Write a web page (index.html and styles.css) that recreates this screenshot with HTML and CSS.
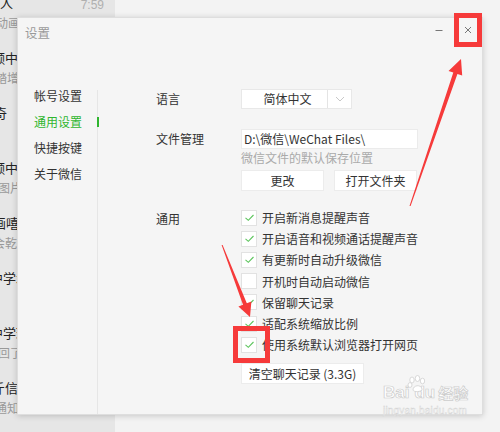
FILE: index.html
```html
<!DOCTYPE html>
<html lang="zh-CN">
<head>
<meta charset="utf-8">
<title>设置</title>
<link rel="stylesheet" href="styles.css">
</head>
<body>
<div class="desktop">
  <div class="chatlist">
    <div class="chat first">
      <div class="chat-title"><span class="name ind-0">人</span><span class="time">7:59</span></div>
      <div class="chat-sub ind-4">动画</div>
    </div>
    <div class="chat">
      <div class="chat-title"><span class="name ind-8">频中华</span></div>
      <div class="chat-sub ind-5">踏增 :</div>
    </div>
    <div class="chat">
      <div class="chat-title"><span class="name ind-6">奇</span></div>
      <div class="chat-sub"></div>
    </div>
    <div class="chat">
      <div class="chat-title"><span class="name ind-8">频中华</span></div>
      <div class="chat-sub ind-2">图片</div>
    </div>
    <div class="chat">
      <div class="chat-title"><span class="name ind-7">画嘻吗</span></div>
      <div class="chat-sub ind-7">会乾</div>
    </div>
    <div class="chat">
      <div class="chat-title"><span class="name ind-10">中学术</span></div>
      <div class="chat-sub"></div>
    </div>
    <div class="chat">
      <div class="chat-title"><span class="name ind-10">中学珊</span></div>
      <div class="chat-sub ind-2">回了</div>
    </div>
    <div class="chat">
      <div class="chat-title"><span class="name ind-8">斤信息</span></div>
      <div class="chat-sub ind-5">通知</div>
    </div>
  </div>
  <div class="chatarea"></div>
</div>

<div class="window">
  <div class="titlebar">
    <span class="wtitle">设置</span>
    <span class="wbtn min"><svg width="10" height="10" viewBox="0 0 10 10"><line x1="1.5" y1="5.5" x2="8.5" y2="5.5" stroke="#777" stroke-width="1"/></svg></span>
    <span class="wbtn close"><svg width="10" height="10" viewBox="0 0 10 10"><path d="M2 2 L8 8 M8 2 L2 8" stroke="#777" stroke-width="1"/></svg></span>
  </div>
  <div class="wbody">
    <div class="sidebar">
      <div class="side-list">
        <div class="side-item">帐号设置</div>
        <div class="side-item active">通用设置</div>
        <div class="side-item">快捷按键</div>
        <div class="side-item">关于微信</div>
      </div>
    </div>
    <div class="main">
      <div class="row lang">
        <div class="label">语言</div>
        <div class="control">
          <div class="select">
            <span class="select-text">简体中文</span>
            <span class="select-arrow"><svg width="10" height="6" viewBox="0 0 10 6"><path d="M1 1 L5 5 L9 1" fill="none" stroke="#c8c8c8" stroke-width="1"/></svg></span>
          </div>
        </div>
      </div>
      <div class="row files">
        <div class="label">文件管理</div>
        <div class="control">
          <div class="path">D:\微信\WeChat Files\</div>
          <div class="hint">微信文件的默认保存位置</div>
          <div class="btns">
            <div class="btn">更改</div>
            <div class="btn">打开文件夹</div>
          </div>
        </div>
      </div>
      <div class="row general">
        <div class="label">通用</div>
        <div class="control">
          <div class="check"><span class="box on"><svg width="13" height="13" viewBox="0 0 13 13"><path d="M2.5 6.8 L5.3 9.3 L10.5 4" fill="none" stroke="#5cc45c" stroke-width="1.1"/></svg></span><span>开启新消息提醒声音</span></div>
          <div class="check"><span class="box on"><svg width="13" height="13" viewBox="0 0 13 13"><path d="M2.5 6.8 L5.3 9.3 L10.5 4" fill="none" stroke="#5cc45c" stroke-width="1.1"/></svg></span><span>开启语音和视频通话提醒声音</span></div>
          <div class="check"><span class="box on"><svg width="13" height="13" viewBox="0 0 13 13"><path d="M2.5 6.8 L5.3 9.3 L10.5 4" fill="none" stroke="#5cc45c" stroke-width="1.1"/></svg></span><span>有更新时自动升级微信</span></div>
          <div class="check"><span class="box"></span><span>开机时自动启动微信</span></div>
          <div class="check"><span class="box on"><svg width="13" height="13" viewBox="0 0 13 13"><path d="M2.5 6.8 L5.3 9.3 L10.5 4" fill="none" stroke="#5cc45c" stroke-width="1.1"/></svg></span><span>保留聊天记录</span></div>
          <div class="check"><span class="box on"><svg width="13" height="13" viewBox="0 0 13 13"><path d="M2.5 6.8 L5.3 9.3 L10.5 4" fill="none" stroke="#5cc45c" stroke-width="1.1"/></svg></span><span>适配系统缩放比例</span></div>
          <div class="check"><span class="box on"><svg width="13" height="13" viewBox="0 0 13 13"><path d="M2.5 6.8 L5.3 9.3 L10.5 4" fill="none" stroke="#5cc45c" stroke-width="1.1"/></svg></span><span>使用系统默认浏览器打开网页</span></div>
          <div class="btn wide">清空聊天记录 (3.3G)</div>
        </div>
      </div>
    </div>
  </div>
</div>

<div class="watermark">
  <div class="wm-main"><span>Bai</span><svg class="paw" width="20" height="18" viewBox="0 0 20 18"><g fill="#fff" stroke="#cfcfcf" stroke-width="0.8"><ellipse cx="5" cy="5" rx="2.2" ry="3"/><ellipse cx="10.5" cy="3.5" rx="2.2" ry="3"/><ellipse cx="15.5" cy="6" rx="2.2" ry="2.8"/><ellipse cx="3" cy="10" rx="2" ry="2.4"/><path d="M6 15 C6 10 14 9 15 14 C15.5 17 6.5 17.5 6 15 Z"/></g></svg><span>du</span><span class="wm-cn">经验</span></div>
  <div class="wm-url">jingyan.baidu.com</div>
</div>

<svg class="annot" width="500" height="432" viewBox="0 0 500 432">
  <rect x="456.5" y="15.5" width="23" height="29" fill="none" stroke="#f63a3a" stroke-width="5"/>
  <rect x="235.5" y="328.5" width="32" height="32" fill="none" stroke="#f63a3a" stroke-width="5"/>
  <polygon points="461,59 448.5,71 453.3,72.4 409.5,206 410.6,206 457.4,73.9 462.2,75.6" fill="#f63a3a"/>
  <polygon points="250,317 238.4,306.5 243,304.7 221.6,245 222.6,245 246.8,303.3 251.4,301.5" fill="#f63a3a"/>
</svg>
</body>
</html>
```

FILE: styles.css
```css
* { box-sizing: border-box; }
html, body { margin: 0; padding: 0; }
body {
  width: 500px;
  height: 432px;
  overflow: hidden;
  position: relative;
  font-family: "Noto Sans CJK SC", "Microsoft YaHei", sans-serif;
  color: #333;
  background: #f3f3f3;
}
.desktop { display: flex; height: 432px; }
.chatlist {
  width: 115px;
  background: #e6e6e6;
  display: flex;
  flex-direction: column;
  overflow: hidden;
}
.chat { height: 55px; flex: none; padding-top: 2px; overflow: hidden; }
.chat.first { margin-top: -9px; }
.chat-title {
  display: flex;
  justify-content: space-between;
  align-items: center;
  height: 20px;
  padding-right: 11px;
  font-size: 13px;
  line-height: 20px;
  color: #222;
  white-space: nowrap;
}
.chat-title .name { display: block; }
.time { font-size: 12px; color: #b0b0b0; font-family: "Liberation Sans", sans-serif; margin-top: 3px; }
.chat-sub { font-size: 12px; line-height: 20px; height: 20px; color: #999; white-space: nowrap; }
.ind-0 { text-indent: 0; }
.ind-2 { text-indent: -2px; }
.ind-4 { text-indent: -4px; }
.ind-5 { text-indent: -5px; }
.ind-6 { text-indent: -6px; }
.ind-7 { text-indent: -7px; }
.ind-8 { text-indent: -8px; }
.ind-10 { text-indent: -10px; }
.chatarea { flex: 1; background: #f3f3f3; }

.window {
  position: absolute;
  left: 17px;
  top: 17px;
  width: 466px;
  height: 398px;
  background: #f5f5f5;
  border: 1px solid #dedede;
  box-shadow: 0 1px 6px rgba(0,0,0,0.18);
  display: flex;
  flex-direction: column;
}
.titlebar {
  height: 29px;
  display: flex;
  align-items: center;
  padding-left: 7px;
  flex: none;
}
.wtitle { font-size: 12.5px; color: #9a9a9a; flex: 1; line-height: 16px; }
.wbtn { width: 29px; height: 22px; display: flex; align-items: center; justify-content: center; margin-top: -6px; }

.wbody { flex: 1; display: flex; }
.sidebar {
  width: 80px;
  margin-top: 43px;
  border-right: 1px solid #e6e6e6;
  flex: none;
}
.side-list { margin-top: -7px; }
.side-item {
  height: 26px;
  line-height: 26px;
  padding-left: 16px;
  font-size: 12px;
  color: #333;
  position: relative;
  white-space: nowrap;
}
.side-item.active { color: #2fb52f; }
.side-item.active::after {
  content: "";
  position: absolute;
  right: -1.5px;
  top: 8px;
  width: 2px;
  height: 10px;
  background: #2fb52f;
}
.main { flex: 1; padding-left: 58px; padding-top: 42px; }
.row { display: grid; grid-template-columns: 85px 1fr; }
.label { font-size: 12px; line-height: 20px; color: #333; white-space: nowrap; }
.row.files { margin-top: 20px; }
.row.general { margin-top: 16px; }
.row.general .label { margin-top: 2px; }

.select {
  width: 111px;
  height: 20px;
  display: flex;
  background: #fff;
  border: 1px solid #e8e8e8;
}
.select-text {
  width: 86px;
  text-align: center;
  font-size: 12px;
  line-height: 18px;
  padding-left: 6px;
  border-right: 1px solid #e4e4e4;
}
.select-arrow { flex: 1; display: flex; align-items: center; justify-content: center; }

.path {
  width: 177px;
  height: 20px;
  background: #fff;
  border: 1px solid #ebebeb;
  font-size: 12px;
  line-height: 18px;
  padding-left: 2px;
  white-space: nowrap;
}
.hint { font-size: 12px; line-height: 18px; color: #aaa; white-space: nowrap; }
.btns { display: flex; gap: 10px; margin-top: 3px; }
.btn {
  width: 83px;
  height: 21px;
  background: #fff;
  border: 1px solid #ececec;
  font-size: 12px;
  line-height: 19px;
  text-align: center;
  white-space: nowrap;
}
.btn.wide { width: 123px; margin-top: 8px; }

.check {
  height: 21.2px;
  display: flex;
  align-items: center;
  font-size: 12px;
  white-space: nowrap;
}
.box {
  width: 16px;
  height: 16px;
  background: #fff;
  border: 1px solid #e2e2e2;
  margin-right: 5px;
  display: flex;
  align-items: center;
  justify-content: center;
  flex: none;
}

.watermark {
  position: absolute;
  left: 383px;
  top: 383px;
  width: 92px;
  color: #fff;
  font-family: "Liberation Sans", "Noto Sans CJK SC", sans-serif;
  pointer-events: none;
}
.wm-main {
  display: flex;
  align-items: flex-end;
  font-size: 17px;
  font-weight: bold;
  line-height: 20px;
  -webkit-text-stroke: 0.7px #cccccc;
}
.paw { margin: 0 -13px -4px -2px; position: relative; top: -14px; }
.wm-cn { font-family: "Noto Sans CJK SC", sans-serif; font-size: 15px; margin-left: 3px; }
.wm-url {
  font-size: 10px;
  line-height: 12px;
  letter-spacing: 0.2px;
  -webkit-text-stroke: 0.4px #d0d0d0;
  margin-top: 2px;
}

.annot { position: absolute; left: 0; top: 0; pointer-events: none; }
```
